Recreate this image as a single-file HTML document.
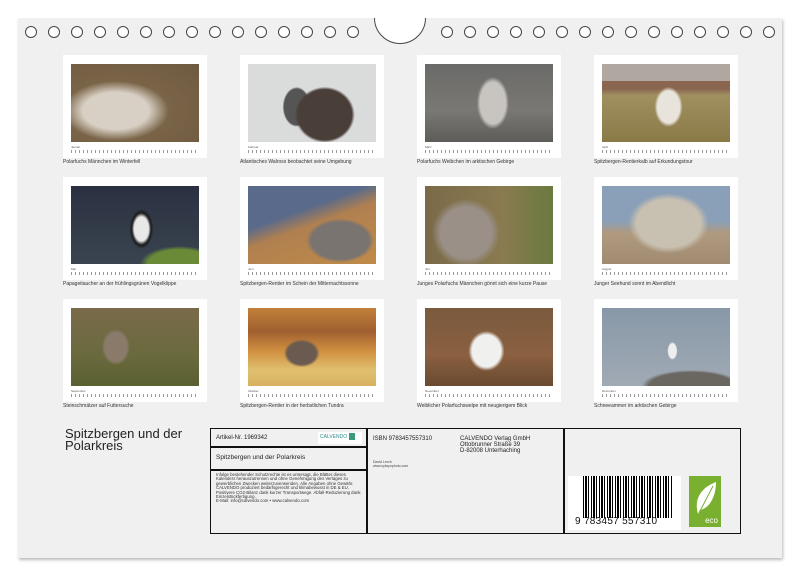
<!DOCTYPE html>
<html><head><meta charset="utf-8"><style>
*{margin:0;padding:0;box-sizing:border-box}
body{width:800px;height:577px;background:#fff;position:relative;overflow:hidden;font-family:"Liberation Sans",sans-serif}
.sheet{position:absolute;left:18px;top:18px;width:764px;height:540px;background:#f0f0f0;box-shadow:1px 2px 3px #bbb}
.hole{position:absolute;top:26px;width:12px;height:12px;border:1.3px solid #444;border-radius:50%;background:#fff}
.notch{position:absolute;left:374px;top:-8px;width:52px;height:52px;border:1.3px solid #444;border-radius:50%;background:#fff}
.card{position:absolute;width:144px;height:103px;background:#fff}
.ph{position:absolute;left:8px;top:9px;width:128px;height:78px;overflow:hidden}
.m{position:absolute;left:8px;top:90px;font-size:3px;color:#555}
.t{position:absolute;left:8px;top:95px;width:128px;height:3px;background:repeating-linear-gradient(90deg,#999 0 1px,transparent 1px 4px)}
.cap{position:absolute;left:0;top:104px;font-size:5px;color:#333;white-space:nowrap}
.box{position:absolute;border:1.5px solid #111}
</style></head><body>
<div class="sheet"></div>
<div class="notch"></div>
<div style="position:absolute;left:0;top:0;width:800px;height:18px;background:#fff"></div>
<div class="hole" style="left:25px"></div><div class="hole" style="left:48px"></div><div class="hole" style="left:71px"></div><div class="hole" style="left:94px"></div><div class="hole" style="left:117px"></div><div class="hole" style="left:140px"></div><div class="hole" style="left:163px"></div><div class="hole" style="left:186px"></div><div class="hole" style="left:209px"></div><div class="hole" style="left:232px"></div><div class="hole" style="left:255px"></div><div class="hole" style="left:278px"></div><div class="hole" style="left:301px"></div><div class="hole" style="left:324px"></div><div class="hole" style="left:347px"></div>
<div class="hole" style="left:441px"></div><div class="hole" style="left:464px"></div><div class="hole" style="left:487px"></div><div class="hole" style="left:510px"></div><div class="hole" style="left:533px"></div><div class="hole" style="left:556px"></div><div class="hole" style="left:579px"></div><div class="hole" style="left:602px"></div><div class="hole" style="left:625px"></div><div class="hole" style="left:648px"></div><div class="hole" style="left:671px"></div><div class="hole" style="left:694px"></div><div class="hole" style="left:717px"></div><div class="hole" style="left:740px"></div><div class="hole" style="left:763px"></div>

<div class="card" style="left:63px;top:55px"><div class="ph" style="background:radial-gradient(ellipse at 35% 60%,#d8d0c4 0 28%,#7a6448 45%,#6e5a40)"></div><div class="m">Januar</div><div class="t"></div><div class="cap">Polarfuchs Männchen im Winterfell</div></div>
<div class="card" style="left:240px;top:55px"><div class="ph" style="background:radial-gradient(ellipse 30px 28px at 60% 65%,#4a3e38 0 90%,transparent 100%),radial-gradient(ellipse 14px 20px at 38% 55%,#555 0 90%,transparent 100%),#dadcdc"></div><div class="m">Februar</div><div class="t"></div><div class="cap">Atlantisches Walross beobachtet seine Umgebung</div></div>
<div class="card" style="left:417px;top:55px"><div class="ph" style="background:radial-gradient(ellipse 16px 26px at 53% 50%,#c8c4c0 0 80%,transparent 100%),linear-gradient(#6a6a68,#7a7874 60%,#5e5c58)"></div><div class="m">März</div><div class="t"></div><div class="cap">Polarfuchs Weibchen im arktischen Gebirge</div></div>
<div class="card" style="left:594px;top:55px"><div class="ph" style="background:radial-gradient(ellipse 14px 20px at 52% 55%,#e8e4dc 0 80%,transparent 100%),linear-gradient(#b0a8a0 0 22%,#8a6650 22% 32%,#a09060 40%,#8a7a48)"></div><div class="m">April</div><div class="t"></div><div class="cap">Spitzbergen-Rentierkalb auf Erkundungstour</div></div>

<div class="card" style="left:63px;top:177px"><div class="ph" style="background:radial-gradient(ellipse 40px 18px at 85% 100%,#6a8a38 0 80%,transparent 100%),radial-gradient(ellipse 12px 20px at 55% 55%,#e8e8e8 0 60%,#1a1a1a 80%,transparent 100%),linear-gradient(#2a3040,#3a4450)"></div><div class="m">Mai</div><div class="t"></div><div class="cap">Papageitaucher an der frühlingsgrünen Vogelklippe</div></div>
<div class="card" style="left:240px;top:177px"><div class="ph" style="background:radial-gradient(ellipse 34px 22px at 72% 70%,#7a7470 0 85%,transparent 100%),linear-gradient(160deg,#5a6a8a 0 35%,#b08050 50%,#c08a48)"></div><div class="m">Juni</div><div class="t"></div><div class="cap">Spitzbergen-Rentier im Schein der Mitternachtssonne</div></div>
<div class="card" style="left:417px;top:177px"><div class="ph" style="background:radial-gradient(ellipse 34px 34px at 32% 60%,#9a9088 0 75%,transparent 100%),linear-gradient(90deg,#7a6a48,#8a7a50 60%,#6a7a40)"></div><div class="m">Juli</div><div class="t"></div><div class="cap">Junges Polarfuchs Männchen gönnt sich eine kurze Pause</div></div>
<div class="card" style="left:594px;top:177px"><div class="ph" style="background:radial-gradient(ellipse 40px 30px at 52% 48%,#c8c0b0 0 80%,transparent 100%),linear-gradient(#8aa0b8 0 45%,#b09a80 60%,#a08a70)"></div><div class="m">August</div><div class="t"></div><div class="cap">Junger Seehund sonnt im Abendlicht</div></div>

<div class="card" style="left:63px;top:299px"><div class="ph" style="background:radial-gradient(ellipse 14px 18px at 35% 50%,#8a7a6a 0 80%,transparent 100%),linear-gradient(#7a6a4a,#6a6a3e 60%,#5a6030)"></div><div class="m">September</div><div class="t"></div><div class="cap">Steinschmätzer auf Futtersuche</div></div>
<div class="card" style="left:240px;top:299px"><div class="ph" style="background:radial-gradient(ellipse 18px 14px at 42% 58%,#6a5a50 0 80%,transparent 100%),linear-gradient(#c08038,#a06030 30%,#d09040 55%,#e0c070 80%,#d8b060)"></div><div class="m">Oktober</div><div class="t"></div><div class="cap">Spitzbergen-Rentier in der herbstlichen Tundra</div></div>
<div class="card" style="left:417px;top:299px"><div class="ph" style="background:radial-gradient(ellipse 18px 20px at 48% 55%,#f0f0ee 0 80%,transparent 100%),linear-gradient(#7a5a3e,#8a6040 60%,#6a4a30)"></div><div class="m">November</div><div class="t"></div><div class="cap">Weiblicher Polarfuchswelpe mit neugierigem Blick</div></div>
<div class="card" style="left:594px;top:299px"><div class="ph" style="background:radial-gradient(ellipse 50px 16px at 70% 100%,#6a6660 0 85%,transparent 100%),radial-gradient(ellipse 5px 9px at 55% 55%,#eee 0 80%,transparent 100%),linear-gradient(#8898a8,#a0aab4)"></div><div class="m">Dezember</div><div class="t"></div><div class="cap">Schneeammer im arktischen Gebirge</div></div>

<div style="position:absolute;left:65px;top:428px;font-size:13px;line-height:12px;color:#222">Spitzbergen und der<br>Polarkreis</div>

<div class="box" style="left:210px;top:428px;width:531px;height:106px"></div>
<div style="position:absolute;left:366px;top:428px;width:1.5px;height:106px;background:#111"></div>
<div style="position:absolute;left:563px;top:428px;width:1.5px;height:106px;background:#111"></div>
<div style="position:absolute;left:210px;top:446px;width:157px;height:1.5px;background:#111"></div>
<div style="position:absolute;left:210px;top:469px;width:157px;height:1.5px;background:#111"></div>
<div style="position:absolute;left:216px;top:435px;font-size:6px;color:#222">Artikel-Nr. 1969342</div>
<div style="position:absolute;left:318px;top:432px;width:44px;height:12px;background:#fff;font-size:5px;color:#2a8a8a;padding:1px 2px">CALVENDO<span style="display:inline-block;width:6px;height:7px;background:#3a9a7a;margin-left:2px;vertical-align:middle"></span></div>
<div style="position:absolute;left:216px;top:454px;font-size:6.5px;color:#222">Spitzbergen und der Polarkreis</div>
<div style="position:absolute;left:216px;top:473px;font-size:4.3px;line-height:4.4px;color:#333;width:150px">Infolge bestehender Schutzrechte ist es untersagt, die Blätter dieses Kalenders herauszutrennen und ohne Genehmigung des Verlages zu gewerblichen Zwecken weiterzuverwenden. Alle Angaben ohne Gewähr.<br>CALVENDO produziert bedarfsgerecht und klimabewusst in DE &amp; EU. Positivere CO2-Bilanz dank kurzer Transportwege. Abfall-Reduzierung dank Einzelstückfertigung.<br>E-Mail: info@calvendo.com • www.calvendo.com</div>
<div style="position:absolute;left:373px;top:436px;font-size:6px;color:#222">ISBN 9783457557310</div>
<div style="position:absolute;left:373px;top:460px;font-size:3.5px;line-height:4px;color:#444">David Lerch<br>www.sylwynphoto.com</div>
<div style="position:absolute;left:460px;top:436px;font-size:6px;line-height:6px;color:#222">CALVENDO Verlag GmbH<br>Ottobrunner Straße 39<br>D-82008 Unterhaching</div>
<div style="position:absolute;left:568px;top:476px;width:113px;height:54px;background:#fff"></div>
<div style="position:absolute;left:583px;top:476px;width:90px;height:42px;background:repeating-linear-gradient(90deg,#000 0 1px,#fff 1px 2px,#000 2px 4px,#fff 4px 5px,#000 5px 6px,#fff 6px 8px)"></div>
<div style="position:absolute;left:575px;top:516px;font-size:10px;color:#111;letter-spacing:.3px">9 783457 557310</div>
<div style="position:absolute;left:689px;top:476px;width:32px;height:51px;background:#7ab030;color:#fff;font-size:8px;text-align:right;padding:40px 3px 0 0">eco
<svg style="position:absolute;left:5px;top:4px" width="24" height="36" viewBox="0 0 24 36"><path d="M4 34 C0 20 6 8 22 2 C22 16 16 28 6 30 Z" fill="#fff"/><path d="M5 33 L19 6" stroke="#7ab030" stroke-width="1"/></svg></div>
</body></html>
